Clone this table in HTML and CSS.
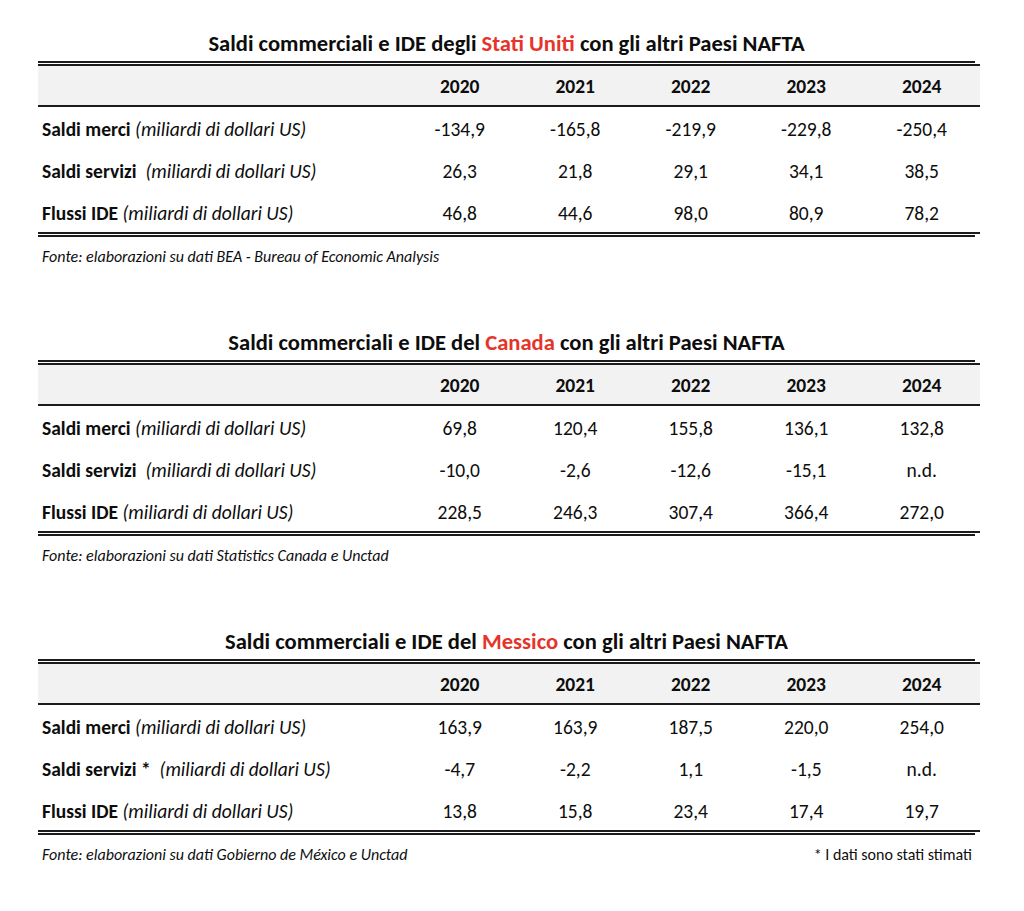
FILE: index.html
```html
<!DOCTYPE html>
<html lang="it">
<head>
<meta charset="utf-8">
<title>Saldi commerciali e IDE - Paesi NAFTA</title>
<link rel="stylesheet" href="styles.css">
</head>
<body>
<main class="page">

  <section class="block">
    <h2 class="title">Saldi commerciali e IDE degli <span class="hl">Stati Uniti</span> con gli altri Paesi NAFTA</h2>
    <div class="frame">
      <table class="data">
        <thead>
          <tr><th class="lbl"></th><th>2020</th><th>2021</th><th>2022</th><th>2023</th><th>2024</th></tr>
        </thead>
        <tbody>
          <tr class="r1"><td class="lbl"><b>Saldi merci</b> <i>(miliardi di dollari US)</i></td><td>-134,9</td><td>-165,8</td><td>-219,9</td><td>-229,8</td><td>-250,4</td></tr>
          <tr class="r2"><td class="lbl"><b>Saldi servizi</b>&nbsp; <i>(miliardi di dollari US)</i></td><td>26,3</td><td>21,8</td><td>29,1</td><td>34,1</td><td>38,5</td></tr>
          <tr class="r3"><td class="lbl"><b>Flussi IDE</b> <i>(miliardi di dollari US)</i></td><td>46,8</td><td>44,6</td><td>98,0</td><td>80,9</td><td>78,2</td></tr>
        </tbody>
      </table>
    </div>
    <div class="source"><span class="src">Fonte: elaborazioni su dati BEA - Bureau of Economic Analysis</span></div>
  </section>

  <section class="block">
    <h2 class="title">Saldi commerciali e IDE del <span class="hl">Canada</span> con gli altri Paesi NAFTA</h2>
    <div class="frame">
      <table class="data">
        <thead>
          <tr><th class="lbl"></th><th>2020</th><th>2021</th><th>2022</th><th>2023</th><th>2024</th></tr>
        </thead>
        <tbody>
          <tr class="r1"><td class="lbl"><b>Saldi merci</b> <i>(miliardi di dollari US)</i></td><td>69,8</td><td>120,4</td><td>155,8</td><td>136,1</td><td>132,8</td></tr>
          <tr class="r2"><td class="lbl"><b>Saldi servizi</b>&nbsp; <i>(miliardi di dollari US)</i></td><td>-10,0</td><td>-2,6</td><td>-12,6</td><td>-15,1</td><td>n.d.</td></tr>
          <tr class="r3"><td class="lbl"><b>Flussi IDE</b> <i>(miliardi di dollari US)</i></td><td>228,5</td><td>246,3</td><td>307,4</td><td>366,4</td><td>272,0</td></tr>
        </tbody>
      </table>
    </div>
    <div class="source"><span class="src">Fonte: elaborazioni su dati Statistics Canada e Unctad</span></div>
  </section>

  <section class="block">
    <h2 class="title">Saldi commerciali e IDE del <span class="hl">Messico</span> con gli altri Paesi NAFTA</h2>
    <div class="frame">
      <table class="data">
        <thead>
          <tr><th class="lbl"></th><th>2020</th><th>2021</th><th>2022</th><th>2023</th><th>2024</th></tr>
        </thead>
        <tbody>
          <tr class="r1"><td class="lbl"><b>Saldi merci</b> <i>(miliardi di dollari US)</i></td><td>163,9</td><td>163,9</td><td>187,5</td><td>220,0</td><td>254,0</td></tr>
          <tr class="r2"><td class="lbl"><b>Saldi servizi *</b>&nbsp; <i>(miliardi di dollari US)</i></td><td>-4,7</td><td>-2,2</td><td>1,1</td><td>-1,5</td><td>n.d.</td></tr>
          <tr class="r3"><td class="lbl"><b>Flussi IDE</b> <i>(miliardi di dollari US)</i></td><td>13,8</td><td>15,8</td><td>23,4</td><td>17,4</td><td>19,7</td></tr>
        </tbody>
      </table>
    </div>
    <div class="source"><span class="src">Fonte: elaborazioni su dati Gobierno de México e Unctad</span><span class="note">* I dati sono stati stimati</span></div>
  </section>

</main>
</body>
</html>
```
FILE: styles.css
```css
html, body {
  margin: 0;
  padding: 0;
  background: #ffffff;
}

body {
  font-family: "Carlito", "Calibri", "Lato", "Liberation Sans", sans-serif;
  color: #0d0d0d;
}

.page {
  width: 937px;
  padding: 30px 0 0 38px;
  display: flex;
  flex-direction: column;
  gap: 62px;
}

.block {
  display: flex;
  flex-direction: column;
}

.title {
  margin: 0 0 5px 0;
  font-size: 22.6px;
  line-height: 26px;
  font-weight: 700;
  text-align: center;
  color: #0d0d0d;
}

.hl {
  color: #e5352b;
}

.frame {
  border-top: 2px solid #1c1c1c;
  border-bottom: 2px solid #1c1c1c;
  padding: 1px 0;
}

.data {
  width: 100%;
  border-collapse: separate;
  border-spacing: 0;
  table-layout: fixed;
  border-top: 2px solid #1c1c1c;
  border-bottom: 2px solid #1c1c1c;
  font-size: 19.5px;
  line-height: 24px;
}

.data th,
.data td {
  padding: 1px 0 0 0;
  text-align: center;
  vertical-align: middle;
  width: 115.5px;
}

.data th.lbl,
.data td.lbl {
  width: 360px;
  text-align: left;
  padding-left: 4px;
}

.data th {
  background: #f2f2f2;
  font-weight: 700;
  border-bottom: 2px solid #1c1c1c;
}

.data thead tr { height: 41px; }
.data tbody tr.r1 { height: 42px; }
.data tbody tr.r2 { height: 43px; }
.data tbody tr.r3 { height: 40px; }

.data b {
  font-weight: 700;
}

.data i {
  font-style: italic;
}

.source {
  margin-top: 10px;
  display: flex;
  justify-content: space-between;
  font-size: 16px;
  line-height: 20px;
  padding: 0 3px 0 4px;
}

.src {
  font-style: italic;
}

.note {
  font-style: normal;
}
```
